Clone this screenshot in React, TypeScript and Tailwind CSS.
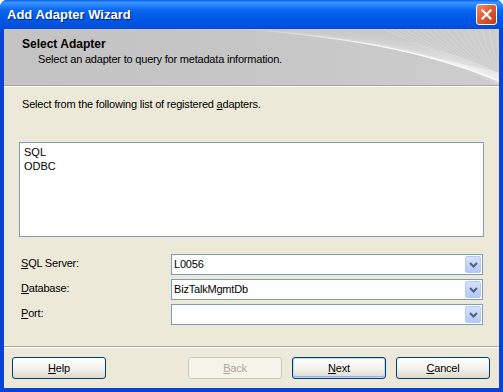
import React from "react";

const sans = "font-['Liberation_Sans',Arial,sans-serif]";

function Swirl() {
  const lines = Array.from({ length: 18 }, (_, i) => i);
  return (
    <svg className="absolute inset-0" width="495" height="56" viewBox="0 0 495 56">
      <defs>
        <linearGradient id="fade" x1="0" x2="1" y1="0" y2="0">
          <stop offset="0" stopColor="#fff" stopOpacity="0" />
          <stop offset="0.55" stopColor="#fff" stopOpacity="0.35" />
          <stop offset="1" stopColor="#fff" stopOpacity="0.6" />
        </linearGradient>
      </defs>
      {lines.map((i) => (
        <path
          key={i}
          d={`M ${210 + i * 9} ${-2 + i * 0.3} Q ${330 + i * 8} ${6 + i * 1.2} ${400 + i * 6} ${22 + i * 1.6} T ${520} ${50 + i * 1.5}`}
          fill="none"
          stroke="url(#fade)"
          strokeWidth="0.8"
        />
      ))}
      {lines.map((i) => (
        <path
          key={"b" + i}
          d={`M ${380 + i * 7} 0 Q ${430 + i * 4} ${22 + i} ${505} ${62 - i}`}
          fill="none"
          stroke="#fff"
          strokeOpacity="0.25"
          strokeWidth="0.8"
        />
      ))}
    </svg>
  );
}

function Combo({ value }: { value: string }) {
  return (
    <div className="w-[312px] h-[21px] border border-[#7F9DB9] bg-white flex items-center justify-between pl-[2px] pr-[1px]">
      <span className="text-[11px] tracking-[-0.2px] text-black">{value}</span>
      <div className="w-[16px] h-[17px] rounded-[2px] border border-[#B5C8F6] bg-gradient-to-b from-[#D6E1FC] to-[#B3C7F6] flex items-center justify-center">
        <svg width="9" height="6" viewBox="0 0 9 6">
          <path d="M1 1 L4.5 4.5 L8 1" fill="none" stroke="#4D6185" strokeWidth="2" />
        </svg>
      </div>
    </div>
  );
}

function Button({ label, hot, disabled, def }: { label: string; hot: string; disabled?: boolean; def?: boolean }) {
  const rest = label.slice(1);
  return (
    <div
      className={`w-[94px] h-[22px] rounded-[3px] border flex items-center justify-center text-[11px] tracking-[-0.2px] ${
        disabled
          ? "border-[#C9C7BA] bg-[#F5F4EA] text-[#ACA899]"
          : "border-[#003C74] bg-gradient-to-b from-[#FFFFFF] via-[#F4F3EE] to-[#DCD8CC] text-black"
      } ${def ? "shadow-[inset_0_0_0_1px_#C5D5F4,inset_0_-1px_0_1px_#8DAEEB]" : ""}`}
    >
      <span>
        <span className="underline underline-offset-1">{hot}</span>
        {rest}
      </span>
    </div>
  );
}

export default function App() {
  return (
    <div className={`w-[503px] h-[392px] flex flex-col bg-[#0843D6] rounded-t-[7px] overflow-hidden ${sans}`}>
      {/* Title bar */}
      <div className="h-[29px] flex items-center justify-between pl-[7px] pr-[6px] bg-[linear-gradient(to_bottom,#0A5FEC_0%,#3D95FF_9%,#2A88FE_16%,#0A66F0_35%,#0058E6_60%,#0053E0_85%,#0A48D4_100%)]">
        <span className="text-[13px] font-bold text-white [text-shadow:1px_1px_0_#0B2277]">
          Add Adapter Wizard
        </span>
        <div className="w-[21px] h-[21px] rounded-[3px] border border-white bg-gradient-to-br from-[#EE8A68] via-[#E0562F] to-[#C4391A] flex items-center justify-center">
          <svg width="11" height="11" viewBox="0 0 11 11">
            <path d="M1.5 1.5 L9.5 9.5 M9.5 1.5 L1.5 9.5" stroke="#fff" strokeWidth="2.2" strokeLinecap="square" />
          </svg>
        </div>
      </div>

      {/* Client area */}
      <div className="flex-1 mx-[4px] mb-[4px] bg-[#ECE9D8] flex flex-col">
        {/* Header */}
        <div className="relative h-[57px] border-b border-[#ACA899] bg-gradient-to-r from-[#C3C3C3] via-[#C6C6C6] to-[#CDCDCD] overflow-hidden">
          <Swirl />
          <div className="relative pl-[18px] pt-[8px]">
            <div className="text-[12px] font-bold text-black leading-[14px]">Select Adapter</div>
            <div className="text-[11px] tracking-[-0.2px] text-black leading-[13px] pl-[16px] mt-[2px]">
              Select an adapter to query for metadata information.
            </div>
          </div>
        </div>

        {/* Body */}
        <div className="flex-1 flex flex-col pt-[11px] border-t border-white">
          <div className="pl-[18px] text-[11px] tracking-[-0.2px] leading-[13px] text-black">
            Select from the following list of registered <span className="underline underline-offset-1">a</span>dapters.
          </div>

          <div className="ml-[15px] mt-[31px] w-[465px] h-[95px] border border-[#7F9DB9] bg-white pl-[4px] pt-[2px] text-[11px] leading-[14px] text-black">
            <div>SQL</div>
            <div>ODBC</div>
          </div>

          <div className="mt-[17px] flex flex-col gap-[4px] pl-[17px]">
            {[
              { hot: "S", rest: "QL Server:", value: "L0056" },
              { hot: "D", rest: "atabase:", value: "BizTalkMgmtDb" },
              { hot: "P", rest: "ort:", value: "" },
            ].map((r) => (
              <div key={r.hot} className="flex items-center">
                <div className="w-[150px] text-[11px] tracking-[-0.2px] text-black -mt-[2px]">
                  <span className="underline underline-offset-1">{r.hot}</span>
                  {r.rest}
                </div>
                <Combo value={r.value} />
              </div>
            ))}
          </div>

          <div className="mt-[21px] border-t border-[#ACA899] border-b border-b-white" />

          <div className="flex items-center pl-[8px] pt-[9px]">
            <Button label="Help" hot="H" />
            <div className="w-[82px]" />
            <Button label="Back" hot="B" disabled />
            <div className="w-[10px]" />
            <Button label="Next" hot="N" def />
            <div className="w-[10px]" />
            <Button label="Cancel" hot="C" />
          </div>
        </div>
      </div>
    </div>
  );
}
